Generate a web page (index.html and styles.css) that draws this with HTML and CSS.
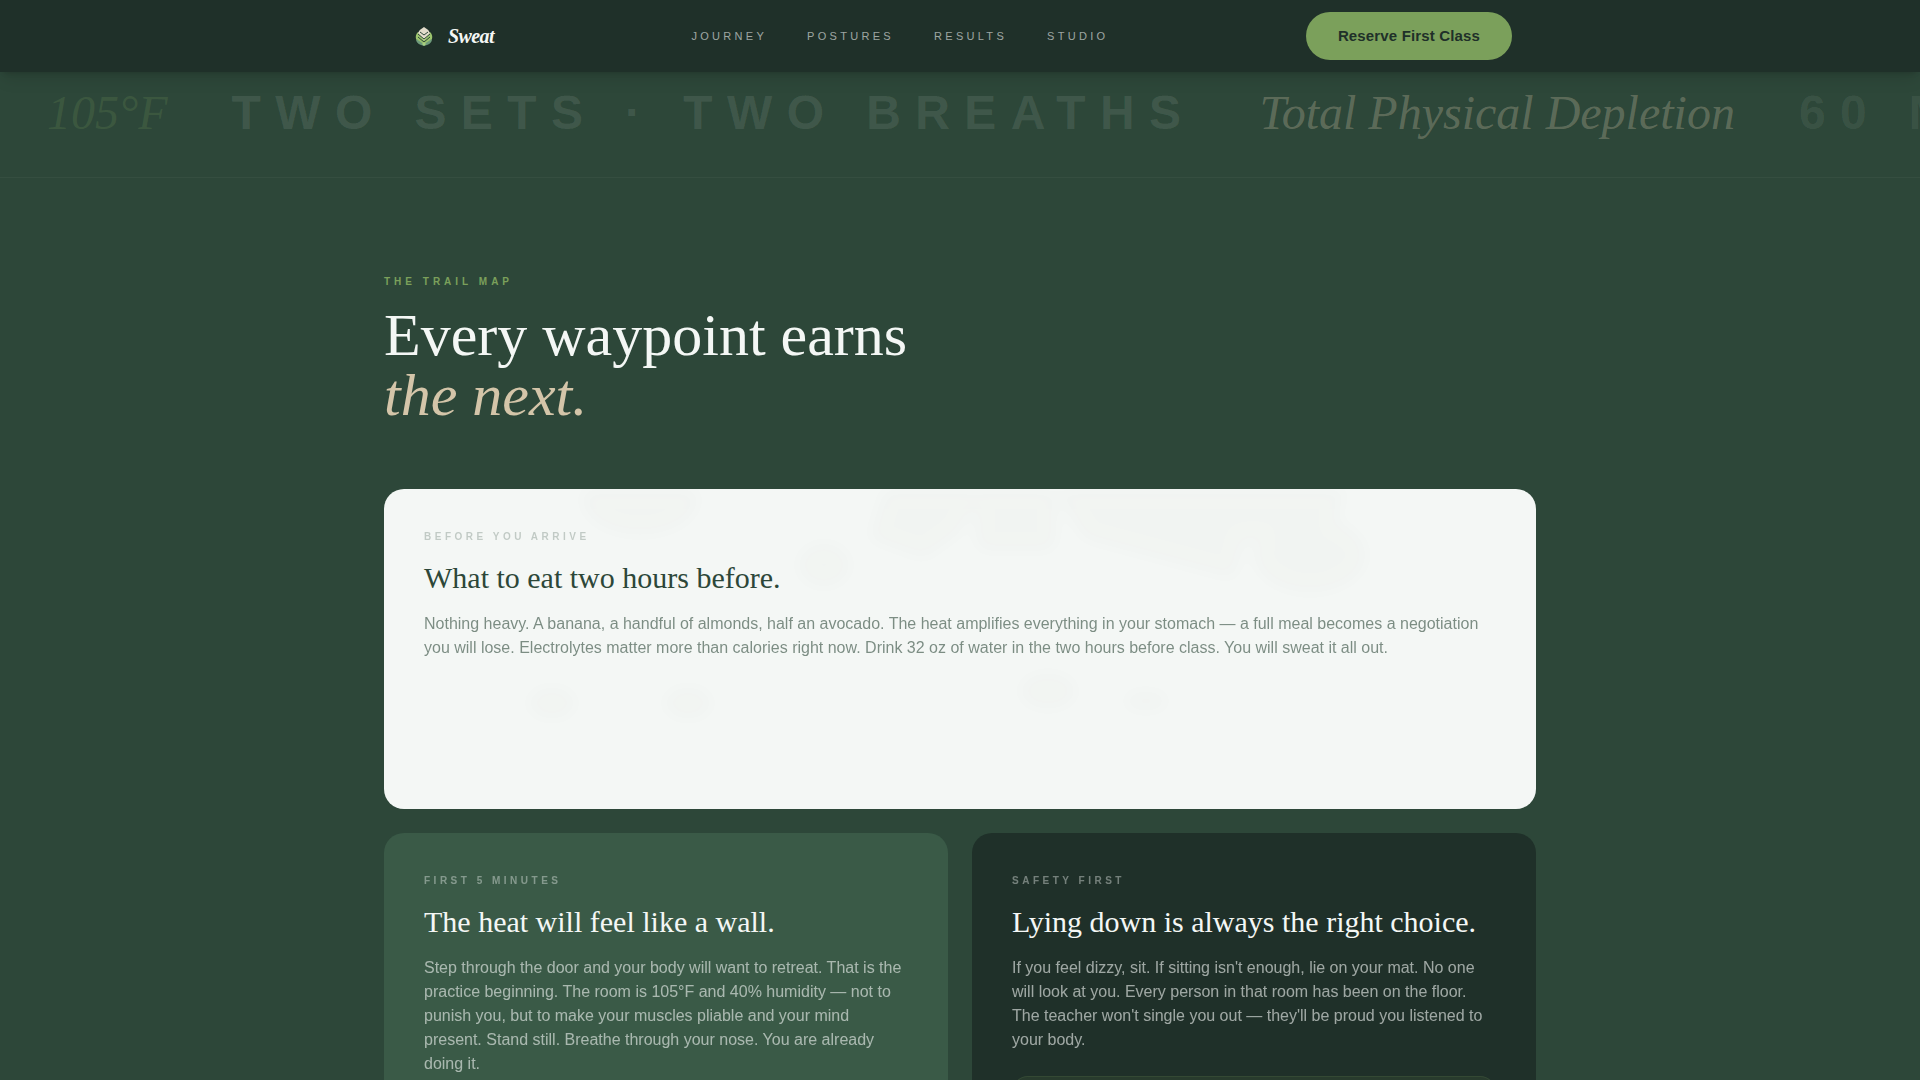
FILE: index.html
```html
<!DOCTYPE html>
<html lang="en">
<head>
  <meta charset="UTF-8">
  <meta name="viewport" content="width=device-width, initial-scale=1.0">
  <title>Sweat</title>
  <link rel="stylesheet" href="styles.css">
</head>
<body>
  <header class="navbar">
    <div class="nav-inner">
      <a class="brand" href="#">
        <svg class="brand-mark" viewBox="0 0 32 32" aria-hidden="true">
          <path d="M8 19 L16 22 L24 19 Q24 23 19 25 L16 26 L13 25 Q8 23 8 19 Z" fill="#6f9c7c"/>
          <path d="M8 19 Q7 15 10 12 L16 19 L22 12 Q25 15 24 19 L16 24 Z" fill="#9cc46e"/>
          <path d="M16 7 Q20 9 22 13 L16 20 L10 13 Q12 9 16 7 Z" fill="#e2dccb"/>
          <path d="M12 12 L16 15 L20 12 M10 14 L16 19 L22 14 M10 17 L16 22 L22 17" fill="none" stroke="#2d4739" stroke-width="1"/>
          <path d="M16 22 L18 24 L16 26 L14 24 Z" fill="#a9cf80"/>
        </svg>
        <span>Sweat</span>
      </a>
      <nav class="nav-links">
        <a href="#journey">Journey</a>
        <a href="#postures">Postures</a>
        <a href="#results">Results</a>
        <a href="#studio">Studio</a>
      </nav>
      <button class="btn-reserve" type="button">Reserve First Class</button>
    </div>
  </header>

  <div class="marquee">
    <div class="marquee-track">
      <span class="script green">105°F</span>
      <span class="caps">Two Sets · Two Breaths</span>
      <span class="script sand">Total Physical Depletion</span>
      <span class="caps faint">60 Minutes</span>
    </div>
  </div>

  <main class="section" id="journey">
    <p class="label label-green">The Trail Map</p>
    <h1>Every waypoint earns<br><em>the next.</em></h1>

    <div class="cards">
      <article class="card card-light">
        <svg class="card-photo" viewBox="0 0 1152 320" preserveAspectRatio="xMidYMin slice" aria-hidden="true">
          <ellipse cx="256" cy="10" rx="58" ry="36"/>
          <path d="M500 0 L600 0 L575 45 L540 70 L485 50 Z"/>
          <rect x="592" y="0" width="80" height="62" rx="10"/>
          <path d="M670 0 L962 0 L950 38 L860 52 L850 90 L700 50 Z"/>
          <ellipse cx="926" cy="66" rx="56" ry="38"/>
          <ellipse cx="440" cy="76" rx="26" ry="22"/>
          <ellipse cx="168" cy="214" rx="24" ry="16"/>
          <ellipse cx="304" cy="214" rx="24" ry="16"/>
          <ellipse cx="664" cy="202" rx="28" ry="18"/>
          <ellipse cx="762" cy="212" rx="22" ry="10"/>
        </svg>
        <p class="label">Before You Arrive</p>
        <h2>What to eat two hours before.</h2>
        <p class="text">Nothing heavy. A banana, a handful of almonds, half an avocado. The heat amplifies everything in your stomach — a full meal becomes a negotiation you will lose. Electrolytes matter more than calories right now. Drink 32 oz of water in the two hours before class. You will sweat it all out.</p>
      </article>

      <article class="card card-green">
        <p class="label">First 5 Minutes</p>
        <h2>The heat will feel like a wall.</h2>
        <p class="text">Step through the door and your body will want to retreat. That is the practice beginning. The room is 105°F and 40% humidity — not to punish you, but to make your muscles pliable and your mind present. Stand still. Breathe through your nose. You are already doing it.</p>
      </article>

      <article class="card card-dark">
        <p class="label">Safety First</p>
        <h2>Lying down is always the right choice.</h2>
        <p class="text">If you feel dizzy, sit. If sitting isn't enough, lie on your mat. No one will look at you. Every person in that room has been on the floor. The teacher won't single you out — they'll be proud you listened to your body.</p>
        <div class="note"></div>
      </article>
    </div>
  </main>
</body>
</html>
```
FILE: styles.css
```css
:root {
  --forest: #2d4739;
  --dark: #1f3029;
  --moss: #3a5a47;
  --green: #7ba05b;
  --sand: #d4c5a9;
  --white: #f4f7f5;
}

* {
  box-sizing: border-box;
}

body {
  margin: 0;
  background: var(--forest);
  color: var(--white);
  font-family: "Liberation Sans", Arial, sans-serif;
  font-size: 16px;
  line-height: 24px;
  overflow-x: hidden;
}

h1, h2, p {
  margin: 0;
}

.navbar {
  position: sticky;
  top: 0;
  z-index: 10;
  background: var(--dark);
  box-shadow: 0 10px 15px -3px rgba(0, 0, 0, 0.1), 0 4px 6px -4px rgba(0, 0, 0, 0.2);
}

.nav-inner {
  display: flex;
  align-items: center;
  justify-content: space-between;
  max-width: 1152px;
  margin: 0 auto;
  padding: 12px 24px;
}

.brand {
  display: flex;
  align-items: center;
  gap: 8px;
  color: var(--white);
  font-family: "Liberation Serif", "Times New Roman", serif;
  font-size: 20px;
  font-style: italic;
  font-weight: bold;
  letter-spacing: -0.03em;
  text-decoration: none;
}

.brand-mark {
  width: 32px;
  height: 32px;
}

.nav-links {
  display: flex;
  gap: 40px;
}

.nav-links a {
  color: rgba(244, 247, 245, 0.6);
  font-size: 11px;
  letter-spacing: 0.3em;
  text-decoration: none;
  text-transform: uppercase;
}

.btn-reserve {
  padding: 12px 32px 13px;
  border: none;
  border-radius: 24px;
  background: var(--green);
  color: var(--dark);
  font-family: inherit;
  font-size: 15px;
  font-weight: bold;
  line-height: 23px;
  letter-spacing: 0.01em;
  cursor: pointer;
}

.btn-reserve:hover {
  background: #8bb06b;
}

.marquee {
  overflow: hidden;
  padding: 17px 0 40px;
  border-bottom: 1px solid rgba(255, 255, 255, 0.04);
}

.marquee-track {
  display: flex;
  gap: 64px;
  padding-left: 47px;
  font-size: 48px;
  line-height: 48px;
  white-space: nowrap;
}

.script {
  font-family: "Liberation Serif", "Times New Roman", serif;
  font-style: italic;
}

.green {
  color: rgba(123, 160, 91, 0.2);
}

.sand {
  color: rgba(212, 197, 169, 0.3);
}

.caps {
  color: rgba(244, 247, 245, 0.1);
  font-weight: bold;
  letter-spacing: 0.3em;
  text-transform: uppercase;
}

.faint {
  color: rgba(244, 247, 245, 0.08);
}

.section {
  max-width: 1152px;
  margin: 0 auto;
  padding: 96px 0;
}

.label {
  margin-bottom: 16px;
  font-size: 10px;
  font-weight: bold;
  line-height: 15px;
  letter-spacing: 0.35em;
  text-transform: uppercase;
  opacity: 0.4;
}

.label-green {
  color: var(--green);
  letter-spacing: 0.4em;
  opacity: 1;
}

h1 {
  margin-bottom: 64px;
  font-family: "Liberation Serif", "Times New Roman", serif;
  font-size: 60px;
  font-weight: normal;
  line-height: 60px;
}

h1 em {
  color: var(--sand);
}

.cards {
  display: grid;
  grid-template-columns: 1fr 1fr;
  gap: 24px;
}

.card {
  position: relative;
  min-height: 320px;
  padding: 40px;
  border-radius: 20px;
  overflow: hidden;
}

.card h2 {
  margin-bottom: 16px;
  font-family: "Liberation Serif", "Times New Roman", serif;
  font-size: 30px;
  font-weight: normal;
  line-height: 36px;
}

.card .text {
  opacity: 0.6;
}

.card-light {
  grid-column: 1 / -1;
  background: var(--white);
  color: var(--forest);
}

.card-light .label {
  opacity: 0.25;
}

.card-photo {
  position: absolute;
  inset: 0;
  width: 100%;
  height: 100%;
  fill: #4a4636;
  opacity: 0.01;
  filter: blur(8px);
}

.card-green {
  background: var(--moss);
}

.card-dark {
  background: var(--dark);
}

.note {
  height: 80px;
  margin-top: 24px;
  border: 1px solid rgba(123, 160, 91, 0.15);
  border-radius: 16px;
  background: rgba(123, 160, 91, 0.1);
}

@media (max-width: 900px) {
  .nav-links {
    display: none;
  }

  .section {
    padding: 64px 24px;
  }

  .cards {
    grid-template-columns: 1fr;
  }
}
```
